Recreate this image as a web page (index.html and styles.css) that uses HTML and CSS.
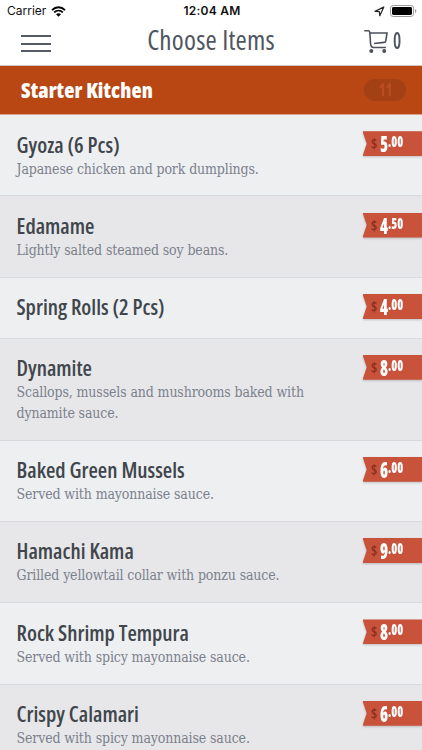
FILE: index.html
```
<!DOCTYPE html>
<html lang="en">
<head>
<meta charset="utf-8">
<title>Choose Items</title>
<link rel="stylesheet" href="styles.css">
</head>
<body>
<div class="status">
  <div class="status-left"><span class="carrier">Carrier</span>
    <svg class="wifi" width="15" height="11" viewBox="0 0 15 11"><path d="M1 4.1C4.8.3 10.2.3 14 4.1M3.2 6.4c2.5-2.4 6.1-2.4 8.6 0" fill="none" stroke="#000" stroke-width="1.9"/><path d="M5 8.2c1.5-1.2 3.5-1.2 5 0L7.5 10.8z"/></svg>
  </div>
  <div class="time">12:04 AM</div>
  <div class="status-right">
    <svg width="11" height="11" viewBox="0 0 11 11"><path d="M1 5.4 9.8 1 5.8 9.8 5.3 5.7z" fill="none" stroke="#222" stroke-width="1.2" stroke-linejoin="round"/></svg>
    <svg width="27" height="12" viewBox="0 0 27 12"><rect x=".5" y=".5" width="23" height="11" rx="2.7" fill="none" stroke="#999"/><rect x="2" y="2" width="20" height="8" rx="1.4"/><path d="M25 4v4q1.4-.6 1.4-2T25 4" fill="#999"/></svg>
  </div>
</div>
<header class="nav">
  <div class="menu"><i></i><i></i><i></i></div>
  <h1>Choose Items</h1>
  <div class="cart">
    <svg width="25" height="25" viewBox="0 0 25 25" fill="none" stroke="#4c535d" stroke-width="1.6"><path d="M.3 1.8H4q1.5 0 1.8 1.5L6.6 15q.2 3.5 3 3.5H22"/><path d="M6 4h17l-1.2 7.8q-.2 1.5-1.7 1.6L10 14.5"/><circle cx="7.3" cy="22" r="2" fill="#4c535d" stroke="none"/><circle cx="20.2" cy="22" r="2" fill="#4c535d" stroke="none"/></svg>
    <span class="count">0</span>
  </div>
</header>
<div class="section"><h2>Starter Kitchen</h2><div class="badge"><span>11</span></div></div>
<ul class="list">
  <li><div class="info"><h3>Gyoza (6 Pcs)</h3><p>Japanese chicken and pork dumplings.</p></div><div class="price"><div class="tag"><span class="cur">$</span><b>5</b><sup>.00</sup></div></div></li>
  <li><div class="info"><h3>Edamame</h3><p>Lightly salted steamed soy beans.</p></div><div class="price"><div class="tag"><span class="cur">$</span><b>4</b><sup>.50</sup></div></div></li>
  <li><div class="info"><h3>Spring Rolls (2 Pcs)</h3></div><div class="price"><div class="tag"><span class="cur">$</span><b>4</b><sup>.00</sup></div></div></li>
  <li><div class="info"><h3>Dynamite</h3><p>Scallops, mussels and mushrooms baked with<br>dynamite sauce.</p></div><div class="price"><div class="tag"><span class="cur">$</span><b>8</b><sup>.00</sup></div></div></li>
  <li><div class="info"><h3>Baked Green Mussels</h3><p>Served with mayonnaise sauce.</p></div><div class="price"><div class="tag"><span class="cur">$</span><b>6</b><sup>.00</sup></div></div></li>
  <li><div class="info"><h3>Hamachi Kama</h3><p>Grilled yellowtail collar with ponzu sauce.</p></div><div class="price"><div class="tag"><span class="cur">$</span><b>9</b><sup>.00</sup></div></div></li>
  <li><div class="info"><h3>Rock Shrimp Tempura</h3><p>Served with spicy mayonnaise sauce.</p></div><div class="price"><div class="tag"><span class="cur">$</span><b>8</b><sup>.00</sup></div></div></li>
  <li><div class="info"><h3>Crispy Calamari</h3><p>Served with spicy mayonnaise sauce.</p></div><div class="price"><div class="tag"><span class="cur">$</span><b>6</b><sup>.00</sup></div></div></li>
</ul>
</body>
</html>
```
FILE: styles.css
```
* { box-sizing: border-box; margin: 0; padding: 0; }
html, body { height: 750px; overflow: hidden; }
body { background: #fff; font-family: "Open Sans", "Noto Sans", sans-serif; font-stretch: 75%; color: #40464c; }
svg { display: block; }

.status { height: 22px; display: grid; grid-template-columns: 1fr auto 1fr; align-items: center; padding: 0 5px 0 7px; font: 500 12px/22px Inter, sans-serif; color: #111; }
.status-left, .status-right { display: flex; align-items: center; gap: 5px; }
.status-right { justify-content: flex-end; }
.carrier { font-weight: 400; font-size: 12px; }
.time { font-weight: 600; letter-spacing: .25px; }

.nav { height: 44px; display: grid; grid-template-columns: 100px 1fr 100px; border-bottom: 1px solid #cfc5c2; }
.menu { padding: 13px 0 0 21px; display: flex; flex-direction: column; gap: 5.5px; }
.menu i { width: 30px; height: 2px; background: #555c68; }
h1 { font-size: 27.2px; font-weight: 400; line-height: 35px; letter-spacing: .2px; text-align: center; color: #50565f; white-space: nowrap; }
.cart { display: flex; justify-content: flex-end; gap: 4px; padding: 7px 18.5px 0 0; }
.count { font-size: 23px; line-height: 23px; font-weight: 600; color: #50565f; transform: scaleX(.8); transform-origin: left; }

.section { height: 49px; background: #b84714; border-bottom: 1px solid #d8a58f; display: flex; justify-content: space-between; align-items: center; padding: 0 16px 0 21px; }
h2 { color: #fff; font-size: 21px; line-height: 30px; font-weight: 800; letter-spacing: .1px; }
.badge { width: 42px; height: 22px; border-radius: 11px; background: #a34014; color: #b84d22; font-size: 17px; line-height: 22px; font-weight: 800; text-align: center; }
.badge span { display: inline-block; transform: scaleX(.8); }

.list { list-style: none; }
li { display: flex; justify-content: space-between; padding: 15.6px 0 16.2px 16.5px; background: #eeeff1; border-bottom: 1px solid #d8d9dc; }
li:nth-child(even) { background: #e7e7e9; }
h3 { font-size: 21.5px; line-height: 28px; font-weight: 540; white-space: nowrap; }
p { font: 14px/20.6px "DejaVu Serif Condensed", "DejaVu Serif", serif; letter-spacing: -.13px; color: #7b818c; white-space: nowrap; }
.price { width: 59.5px; padding-top: .6px; filter: drop-shadow(0 1px 1px rgba(0,0,0,.2)); }
.tag { height: 25px; background: #c9523a; clip-path: polygon(0 0, 100% 0, 100% 100%, 0 100%, 7% 50%); display: flex; padding-left: 8px; color: #fff; }
.cur { color: #89311f; font-size: 15px; line-height: 25px; font-weight: 700; width: 9px; transform: scaleX(.9); transform-origin: left; }
.tag b { width: 8px; font-size: 22px; line-height: 25px; font-weight: 800; transform: scaleX(.74); transform-origin: left; }
sup { font-size: 15px; line-height: 20px; font-weight: 800; transform: scaleX(.8); transform-origin: left; }
```
